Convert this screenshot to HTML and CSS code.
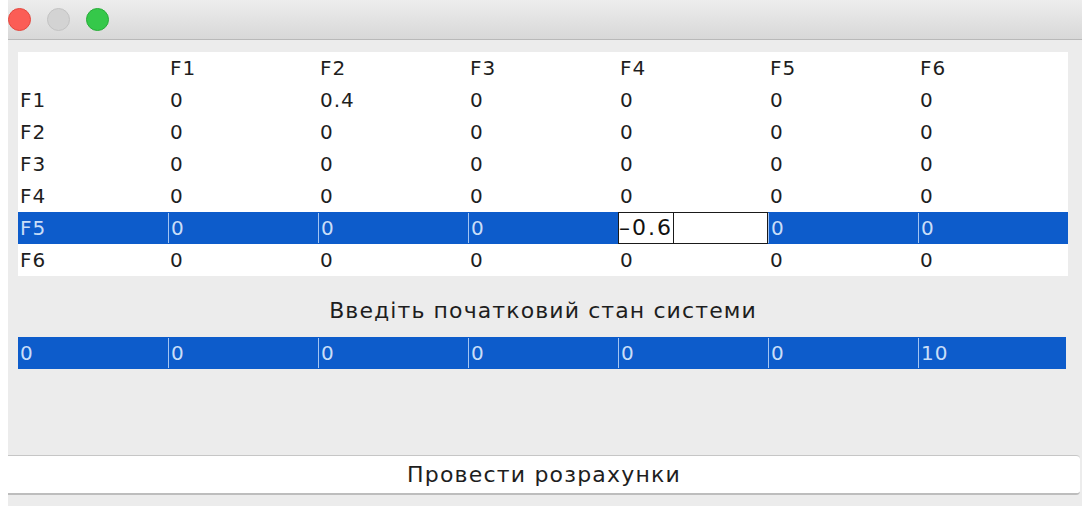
FILE: index.html
```html
<!DOCTYPE html>
<html lang="uk">
<head>
<meta charset="utf-8">
<title>Матриця</title>
<link rel="stylesheet" href="styles.css">
</head>
<body>
<div class="window">
  <div class="titlebar">
    <span class="light red"></span>
    <span class="light grey"></span>
    <span class="light green"></span>
  </div>
  <div class="content">
    <div class="matrix">
      <div class="row head">
        <div class="cell"></div><div class="cell">F1</div><div class="cell">F2</div><div class="cell">F3</div><div class="cell">F4</div><div class="cell">F5</div><div class="cell">F6</div>
      </div>
      <div class="row">
        <div class="cell">F1</div><div class="cell">0</div><div class="cell">0.4</div><div class="cell">0</div><div class="cell">0</div><div class="cell">0</div><div class="cell">0</div>
      </div>
      <div class="row">
        <div class="cell">F2</div><div class="cell">0</div><div class="cell">0</div><div class="cell">0</div><div class="cell">0</div><div class="cell">0</div><div class="cell">0</div>
      </div>
      <div class="row">
        <div class="cell">F3</div><div class="cell">0</div><div class="cell">0</div><div class="cell">0</div><div class="cell">0</div><div class="cell">0</div><div class="cell">0</div>
      </div>
      <div class="row">
        <div class="cell">F4</div><div class="cell">0</div><div class="cell">0</div><div class="cell">0</div><div class="cell">0</div><div class="cell">0</div><div class="cell">0</div>
      </div>
      <div class="row selected">
        <div class="cell">F5</div><div class="cell">0</div><div class="cell">0</div><div class="cell">0</div><div class="cell editing"><span class="edit-text">–0.6</span><span class="caret"></span></div><div class="cell">0</div><div class="cell">0</div>
      </div>
      <div class="row">
        <div class="cell">F6</div><div class="cell">0</div><div class="cell">0</div><div class="cell">0</div><div class="cell">0</div><div class="cell">0</div><div class="cell">0</div>
      </div>
    </div>

    <div class="caption">Введіть початковий стан системи</div>

    <div class="row selected state">
      <div class="cell">0</div><div class="cell">0</div><div class="cell">0</div><div class="cell">0</div><div class="cell">0</div><div class="cell">0</div><div class="cell">10</div>
    </div>
  </div>
  <button class="run" type="button">Провести розрахунки</button>
</div>
</body>
</html>
```

FILE: styles.css
```css
html, body {
  margin: 0;
  padding: 0;
  background: #ffffff;
}

body {
  padding-left: 8px;
  font-family: "DejaVu Sans", "Liberation Sans", sans-serif;
  color: #1e1e1e;
}

.window {
  width: 1074px;
  height: 506px;
  background: #ececec;
  display: flex;
  flex-direction: column;
}

/* window chrome */
.titlebar {
  height: 39px;
  border-bottom: 1px solid #b9b9b9;
  background: linear-gradient(#ededed, #d8d8d8);
  display: flex;
  align-items: center;
  gap: 16px;
}

.light {
  width: 23px;
  height: 23px;
  border-radius: 50%;
  box-sizing: border-box;
}

.light.red {
  background: #fb5d56;
  border: 1px solid #e4483f;
}

.light.grey {
  background: #d3d3d3;
  border: 1px solid #c3c3c3;
}

.light.green {
  background: #35c84a;
  border: 1px solid #27ad38;
}

/* table area */
.content {
  padding: 12px 14px 0 10px;
  flex: 1;
}

.matrix {
  background: #ffffff;
  width: 1050px;
}

.row {
  display: grid;
  grid-template-columns: repeat(7, 150px);
  height: 32px;
}

.cell {
  font-size: 20px;
  letter-spacing: 1px;
  line-height: 32px;
  padding-left: 2px;
  white-space: nowrap;
  overflow: hidden;
}

.row.selected {
  background: #0d5ccb;
}

.row.selected .cell {
  color: #c9def8;
  height: 30px;
  line-height: 30px;
  margin-top: 1px;
}

.row.selected .cell + .cell {
  border-left: 1px solid #a3c4f2;
  padding-left: 2px;
}

.row.selected .cell.editing {
  background: #ffffff;
  color: #111111;
  border: 1px solid #1a1a1a;
  margin-top: 0;
  height: 32px;
  line-height: 30px;
  box-sizing: border-box;
  padding-left: 0;
  font-size: 22px;
  letter-spacing: 2px;
  display: flex;
  align-items: stretch;
}

.caret {
  width: 1px;
  background: #1a1a1a;
  margin-left: 0;
}

.caption {
  font-size: 22px;
  letter-spacing: 1.1px;
  text-align: center;
  height: 61px;
  line-height: 70px;
  color: #1e1e1e;
}

.state {
  width: 1048px;
  height: 32px;
}

/* action button */
.run {
  margin: 0 2px 11px 0;
  height: 40px;
  border: none;
  border-top: 1px solid #c6c6c6;
  border-bottom: 2px solid #bdbdbd;
  border-radius: 0 4px 4px 0;
  background: #ffffff;
  font-family: "DejaVu Sans", "Liberation Sans", sans-serif;
  font-size: 22px;
  letter-spacing: 1.2px;
  color: #1e1e1e;
  padding: 0;
}
```
